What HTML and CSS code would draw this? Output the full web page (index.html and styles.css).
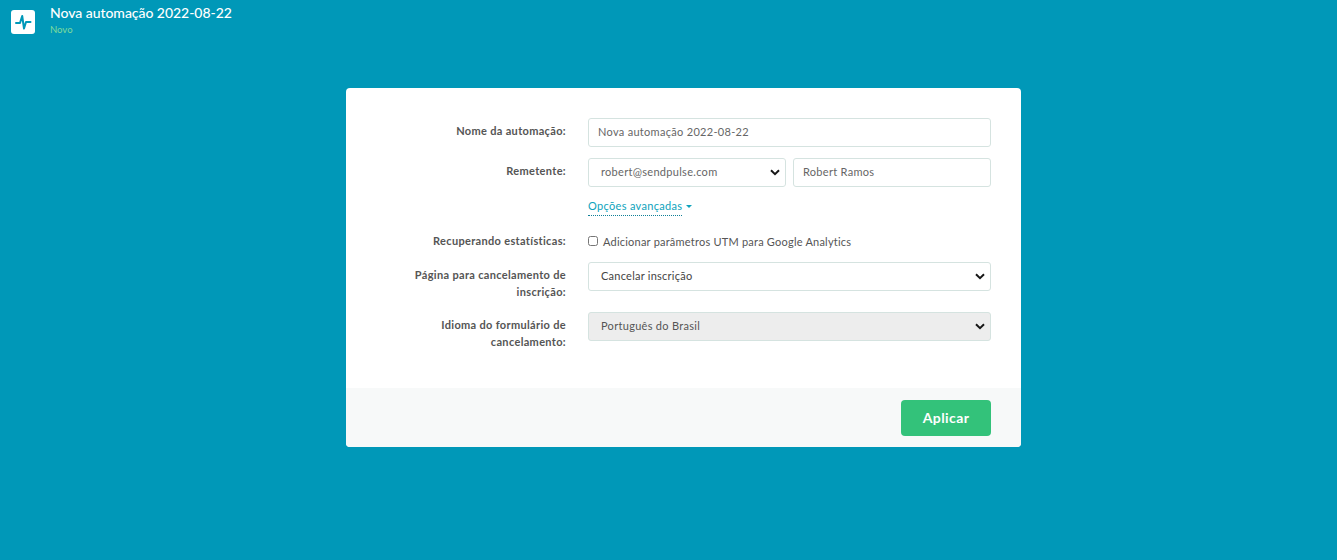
FILE: index.html
```html
<!DOCTYPE html>
<html lang="pt-BR">
<head>
<meta charset="utf-8">
<title>Nova automação 2022-08-22</title>
<link rel="stylesheet" href="styles.css">
</head>
<body>
<header class="top">
  <div class="logo">
    <svg width="18" height="18" viewBox="0 0 18 18" fill="none" stroke="#0098b8" stroke-width="2" stroke-linecap="round" stroke-linejoin="round"><path d="M2 10H6L8.2 3L10 15.5L12 9H16.5"/></svg>
  </div>
  <div class="heading">
    <div class="title">Nova automação 2022-08-22</div>
    <div class="status">Novo</div>
  </div>
</header>
<main class="card">
  <form class="form">
    <div class="row">
      <label class="label">Nome da automação:</label>
      <div class="control"><input class="field" type="text" value="Nova automação 2022-08-22"></div>
    </div>
    <div class="row">
      <label class="label">Remetente:</label>
      <div class="control split">
        <select class="field pick"><option>robert@sendpulse.com</option></select>
        <input class="field" type="text" value="Robert Ramos">
      </div>
    </div>
    <div class="row row-link">
      <div class="label"></div>
      <div class="control"><a class="more"><span class="more-text">Opções avançadas</span><span class="caret"></span></a></div>
    </div>
    <div class="row row-check">
      <label class="label">Recuperando estatísticas:</label>
      <div class="control check"><input class="box" type="checkbox"><span>Adicionar parâmetros UTM para Google Analytics</span></div>
    </div>
    <div class="row row-tall">
      <label class="label plain">Página para cancelamento de inscrição:</label>
      <div class="control"><select class="field pick dark"><option>Cancelar inscrição</option></select></div>
    </div>
    <div class="row row-tall">
      <label class="label plain">Idioma do formulário de cancelamento:</label>
      <div class="control"><select class="field pick off"><option>Português do Brasil</option></select></div>
    </div>
  </form>
  <footer class="foot"><button class="apply" type="button">Aplicar</button></footer>
</main>
</body>
</html>
```

FILE: styles.css
```css
* { box-sizing: border-box; }
html, body { margin: 0; height: 100%; }
body {
  background: #0098b8;
  font-family: "Lato", "Open Sans", sans-serif;
  font-size: 11px;
  letter-spacing: .3px;
  color: #555;
  overflow: hidden;
}
.top { display: flex; height: 88px; padding: 10px 0 0 11px; gap: 15px; }
.logo {
  width: 24px; height: 24px; background: #fff; border-radius: 3px;
  display: flex; align-items: center; justify-content: center;
}
.heading { margin-top: -7px; }
.title { color: #fff; font-size: 14px; line-height: 19px; font-weight: 500; letter-spacing: -.04px; }
.status { color: #7edc9c; font-size: 9.5px; line-height: 11px; margin-top: 2px; letter-spacing: 0; }
.card {
  width: 675px; height: 359px; margin-left: 346px;
  background: #fff; border-radius: 4px; overflow: hidden;
  display: flex; flex-direction: column;
}
.form { flex: 1; padding: 30px 30px 0 50px; }
.row { display: flex; gap: 22px; margin-bottom: 11px; }
.label {
  width: 170px; flex: none; text-align: right; font-weight: 700; color: #555;
  line-height: 25px; font-size: 11px; letter-spacing: .33px;
}
.label.plain { line-height: 17px; }
.control { flex: 1; min-width: 0; }
.split { display: grid; grid-template-columns: 1fr 1fr; gap: 7px; }
.field {
  display: block; width: 100%; height: 29px; border: 1px solid #d5e3e0; border-radius: 3px;
  background: #fff; padding: 0 9px 2px; font: 11px "Lato", sans-serif; letter-spacing: .3px; color: #666; outline: 0;
}
.pick {
  appearance: none; padding-left: 12px;
  background-image: url("data:image/svg+xml,%3Csvg xmlns='http://www.w3.org/2000/svg' width='10' height='7' viewBox='0 0 10 7'%3E%3Cpath d='M1 1.2L5 5.2L9 1.2' fill='none' stroke='%23181818' stroke-width='2'/%3E%3C/svg%3E");
  background-repeat: no-repeat;
  background-position: right 5px center;
}
.dark { color: #444; letter-spacing: .25px; }
.off { background-color: #ededed; color: #555; }
.row-link { margin-bottom: 0; height: 33px; }
.row-link .label { line-height: 18px; }
.more { display: inline-flex; align-items: center; color: #0ea3bc; line-height: 15px; letter-spacing: .32px; }
.more-text { border-bottom: 1px dotted #0f7f97; padding-bottom: 2px; }
.caret {
  margin: 0 0 2px 4px; width: 0; height: 0;
  border-left: 3px solid transparent; border-right: 3px solid transparent; border-top: 3px solid #0ea3bc;
}
.row-check { height: 31px; margin-bottom: 0; }
.row-check .label { line-height: 20px; }
.check { display: flex; align-items: center; gap: 5px; height: 20px; letter-spacing: .22px; }
.box { width: 10px; height: 10px; margin: 0; }
.row-tall { height: 50px; margin-bottom: 0; }
.row-tall .label { padding-top: 4px; }
.foot {
  height: 59px; background: #f7f9f9; display: flex; justify-content: flex-end; align-items: flex-start;
  padding: 12px 30px 0 0;
}
.apply {
  width: 90px; height: 36px; border: 0; border-radius: 4px; background: #33c27a; color: #fff;
  font: 700 14px "Lato", sans-serif; letter-spacing: .4px; padding: 0 0 2px;
}
```
